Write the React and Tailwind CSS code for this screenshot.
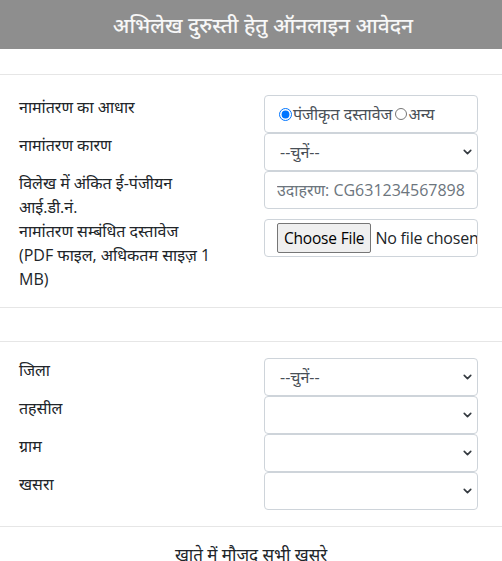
import { ChevronDown } from "lucide-react";

const upperRows = [
  { label: ["नामांतरण का आधार"], field: "radio" },
  { label: ["नामांतरण कारण"], field: "select", value: "--चुनें--" },
  { label: ["विलेख में अंकित ई-पंजीयन", "आई.डी.नं."], field: "text" },
  { label: ["नामांतरण सम्बंधित दस्तावेज", "(PDF फाइल, अधिकतम साइज़ 1", "MB)"], field: "file" },
];

const lowerRows = [
  { label: "जिला", value: "--चुनें--" },
  { label: "तहसील", value: "" },
  { label: "ग्राम", value: "" },
  { label: "खसरा", value: "" },
];

function SelectBox({ value }) {
  return (
    <div className="relative h-[38px] w-[214px]">
      <select
        defaultValue="x"
        className="h-full w-full appearance-none rounded-[4px] border border-[#ced4da] bg-white pl-[15px] pr-8 text-[16px] text-[#495057] outline-none"
      >
        <option value="x">{value}</option>
      </select>
      <ChevronDown
        size={13}
        strokeWidth={3}
        className="pointer-events-none absolute right-[4px] top-1/2 -translate-y-1/2 text-[#343a40]"
      />
    </div>
  );
}

function Field({ row }) {
  if (row.field === "radio") {
    return (
      <div className="flex h-[38px] w-[214px] items-center rounded-[4px] border border-[#ced4da] bg-white px-3 text-[16px] text-[#495057]">
        <input type="radio" name="aadhar" defaultChecked className="m-0 ml-[2px] mr-[1px] h-[13px] w-[13px] accent-[#0075ff]" />
        <span>पंजीकृत दस्तावेज</span>
        <input type="radio" name="aadhar" className="m-0 ml-[3px] mr-[1px] h-[12px] w-[12px] accent-[#0075ff]" />
        <span>अन्य</span>
      </div>
    );
  }
  if (row.field === "select") return <SelectBox value={row.value} />;
  if (row.field === "text") {
    return (
      <input
        type="text"
        placeholder="उदाहरण: CG631234567898765"
        className="h-[38px] w-[214px] rounded-[4px] border border-[#ced4da] bg-white px-3 text-[16px] text-[#495057] outline-none placeholder:text-[#6c757d]"
      />
    );
  }
  return (
    <div className="flex h-[38px] w-[214px] items-center overflow-hidden whitespace-nowrap rounded-[4px] border border-[#ced4da] bg-white pl-3 text-[16px] text-[#212529]">
      <span className="flex h-[30px] shrink-0 items-center rounded-[2px] border border-[#767676] bg-[#efefef] px-[6px] text-[15.5px] tracking-[-0.2px] text-[#000]">
        Choose File
      </span>
      <span className="ml-[4px] shrink-0 tracking-[-0.2px]">No file chosen</span>
    </div>
  );
}

export default function App() {
  return (
    <div className="w-[502px] bg-white font-['Open_Sans','Noto_Sans',sans-serif] text-[16px] leading-[24px] text-[#212529]">
      <div className="flex h-[49px] items-center justify-center bg-[#8e8e8e] pl-6 text-[21px] font-medium text-[#f7f7f7]">
        अभिलेख दुरुस्ती हेतु ऑनलाइन आवेदन
      </div>
      <div className="h-[25px]" />
      <div className="border-t border-[#e6e6e6]" />

      <div className="flex flex-col px-[19px] pb-[16px] pt-[20px]">
        {upperRows.map((row, i) => (
          <div key={i} className="flex items-start">
            <div className="w-[245px]">
              {row.label.map((line, j) => (
                <div key={j}>{line}</div>
              ))}
            </div>
            <Field row={row} />
          </div>
        ))}
      </div>

      <div className="border-t border-[#e6e6e6]" />
      <div className="h-[33px]" />
      <div className="border-t border-[#e6e6e6]" />

      <div className="flex flex-col px-[19px] py-[16px]">
        {lowerRows.map((row, i) => (
          <div key={i} className="flex items-start">
            <div className="w-[245px]">{row.label}</div>
            <SelectBox value={row.value} />
          </div>
        ))}
      </div>

      <div className="border-t border-[#e6e6e6]" />
      <div className="pt-[16px] text-center text-[17px]">खाते में मौजूद सभी खसरे</div>
    </div>
  );
}
